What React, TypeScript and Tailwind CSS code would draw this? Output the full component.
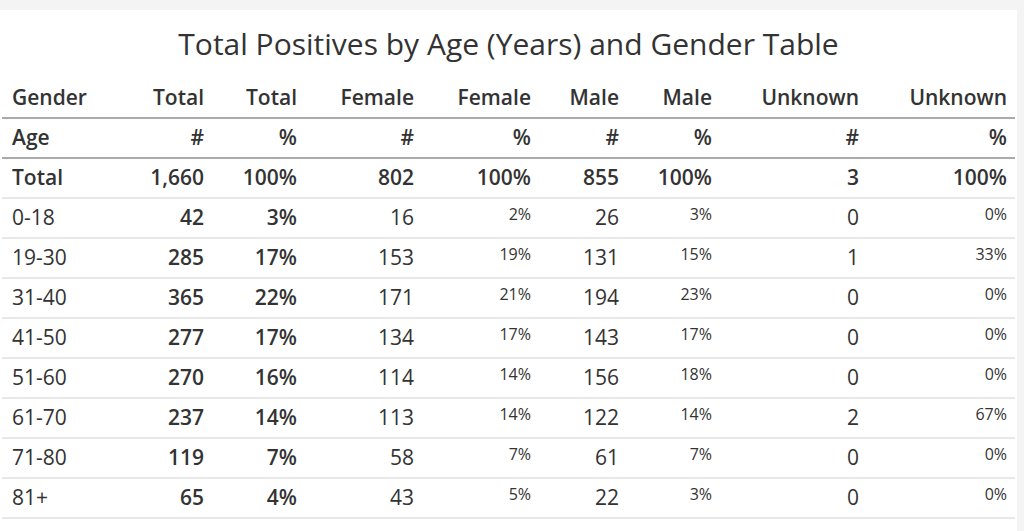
const rows = [
  { age: "0-18", total: "42", totalPct: "3%", f: "16", fp: "2%", m: "26", mp: "3%", u: "0", up: "0%" },
  { age: "19-30", total: "285", totalPct: "17%", f: "153", fp: "19%", m: "131", mp: "15%", u: "1", up: "33%" },
  { age: "31-40", total: "365", totalPct: "22%", f: "171", fp: "21%", m: "194", mp: "23%", u: "0", up: "0%" },
  { age: "41-50", total: "277", totalPct: "17%", f: "134", fp: "17%", m: "143", mp: "17%", u: "0", up: "0%" },
  { age: "51-60", total: "270", totalPct: "16%", f: "114", fp: "14%", m: "156", mp: "18%", u: "0", up: "0%" },
  { age: "61-70", total: "237", totalPct: "14%", f: "113", fp: "14%", m: "122", mp: "14%", u: "2", up: "67%" },
  { age: "71-80", total: "119", totalPct: "7%", f: "58", fp: "7%", m: "61", mp: "7%", u: "0", up: "0%" },
  { age: "81+", total: "65", totalPct: "4%", f: "43", fp: "5%", m: "22", mp: "3%", u: "0", up: "0%" },
];

const Small = ({ children }: { children: React.ReactNode }) => (
  <span className="relative -top-[5px] text-[16px]">{children}</span>
);

const App = () => {
  return (
    <div
      className="h-[531px] bg-[#f4f4f4] pt-[10px] pr-[7px] text-[#333]"
      style={{ fontFamily: '"Open Sans", "Liberation Sans", sans-serif' }}
    >
      <div className="h-full bg-white">
        <h1 className="pt-[14px] pb-[14px] text-center text-[30px] leading-[40px] font-normal">
          Total Positives by Age (Years) and Gender Table
        </h1>
        <table className="ml-[2px] w-[1013px] table-fixed border-collapse text-[21px]">
          <colgroup>
            <col className="w-[118px]" />
            <col className="w-[92px]" />
            <col className="w-[93px]" />
            <col className="w-[117px]" />
            <col className="w-[117px]" />
            <col className="w-[88px]" />
            <col className="w-[93px]" />
            <col className="w-[147px]" />
            <col className="w-[148px]" />
          </colgroup>
          <thead>
            <tr className="h-[40px] border-b-2 border-[#aaa]">
              <th className="px-[10px] text-left font-semibold">Gender</th>
              <th className="px-2 text-right font-semibold">Total</th>
              <th className="px-2 text-right font-semibold">Total</th>
              <th className="px-2 text-right font-semibold">Female</th>
              <th className="px-2 text-right font-semibold">Female</th>
              <th className="px-2 text-right font-semibold">Male</th>
              <th className="px-2 text-right font-semibold">Male</th>
              <th className="px-2 text-right font-semibold">Unknown</th>
              <th className="px-2 text-right font-semibold">Unknown</th>
            </tr>
            <tr className="h-[40px] border-b-2 border-[#aaa]">
              <th className="px-[10px] text-left font-semibold">Age</th>
              <th className="px-2 text-right font-semibold">#</th>
              <th className="px-2 text-right font-semibold">%</th>
              <th className="px-2 text-right font-semibold">#</th>
              <th className="px-2 text-right font-semibold">%</th>
              <th className="px-2 text-right font-semibold">#</th>
              <th className="px-2 text-right font-semibold">%</th>
              <th className="px-2 text-right font-semibold">#</th>
              <th className="px-2 text-right font-semibold">%</th>
            </tr>
          </thead>
          <tbody>
            <tr className="h-[40px] border-b-2 border-[#e8e8e8] font-semibold">
              <td className="px-[10px] text-left">Total</td>
              <td className="px-2 text-right">1,660</td>
              <td className="px-2 text-right">100%</td>
              <td className="px-2 text-right">802</td>
              <td className="px-2 text-right">100%</td>
              <td className="px-2 text-right">855</td>
              <td className="px-2 text-right">100%</td>
              <td className="px-2 text-right">3</td>
              <td className="px-2 text-right">100%</td>
            </tr>
            {rows.map((r) => (
              <tr key={r.age} className="h-[40px] border-b-2 border-[#e8e8e8]">
                <td className="px-[10px] text-left">{r.age}</td>
                <td className="px-2 text-right font-semibold">{r.total}</td>
                <td className="px-2 text-right font-semibold">{r.totalPct}</td>
                <td className="px-2 text-right">{r.f}</td>
                <td className="px-2 text-right"><Small>{r.fp}</Small></td>
                <td className="px-2 text-right">{r.m}</td>
                <td className="px-2 text-right"><Small>{r.mp}</Small></td>
                <td className="px-2 text-right">{r.u}</td>
                <td className="px-2 text-right"><Small>{r.up}</Small></td>
              </tr>
            ))}
          </tbody>
        </table>
      </div>
    </div>
  );
};

export default App;
